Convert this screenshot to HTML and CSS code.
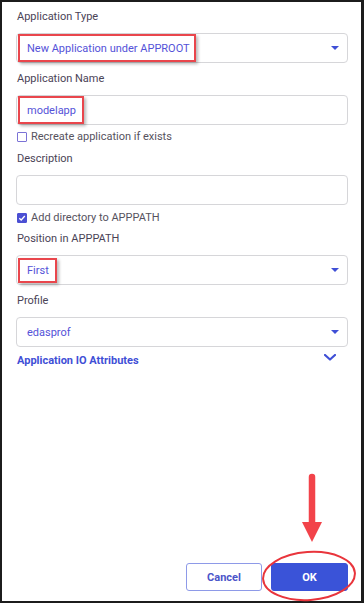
FILE: index.html
```html
<!DOCTYPE html>
<html>
<head>
<meta charset="utf-8">
<link rel="stylesheet" href="styles.css">
</head>
<body>
<div class="frame">
  <div class="form">
    <div class="label l1">Application Type</div>
    <div class="field select">
      <span class="hl hl-type">New Application under APPROOT</span>
      <svg class="caret" width="8" height="4" viewBox="0 0 8 4"><path d="M0 0H8L4 4Z" fill="#3f4fd6"/></svg>
    </div>
    <div class="label">Application Name</div>
    <div class="field">
      <span class="hl hl-name">modelapp</span>
    </div>
    <div class="check-row cr1">
      <span class="box"></span>
      <span class="check-text">Recreate application if exists</span>
    </div>
    <div class="label l3">Description</div>
    <div class="field"></div>
    <div class="check-row cr2">
      <span class="box checked"><svg width="8" height="8" viewBox="0 0 8 8"><path d="M1.3 4.2 L3.2 6 L6.8 2" fill="none" stroke="#fff" stroke-width="1.3"/></svg></span>
      <span class="check-text">Add directory to APPPATH</span>
    </div>
    <div class="label l4">Position in APPPATH</div>
    <div class="field select">
      <span class="hl hl-first">First</span>
      <svg class="caret" width="8" height="4" viewBox="0 0 8 4"><path d="M0 0H8L4 4Z" fill="#3f4fd6"/></svg>
    </div>
    <div class="label">Profile</div>
    <div class="field select">
      <span class="value">edasprof</span>
      <svg class="caret" width="8" height="4" viewBox="0 0 8 4"><path d="M0 0H8L4 4Z" fill="#3f4fd6"/></svg>
    </div>
    <div class="io-row">
      <span class="io-title">Application IO Attributes</span>
      <svg class="chev" width="12" height="7" viewBox="0 0 12 7"><path d="M1 1 L6 5.5 L11 1" fill="none" stroke="#3f4fd6" stroke-width="2.2" stroke-linecap="round" stroke-linejoin="round"/></svg>
    </div>
  </div>
  <div class="actions">
    <button class="btn cancel">Cancel</button>
    <button class="btn ok">OK</button>
  </div>
  <svg class="annot" width="110" height="130" viewBox="0 0 110 130">
    <path d="M52 5 L52 52" stroke="#f2434a" stroke-width="6.5" stroke-linecap="round"/>
    <path d="M42 50 L62 50 L52 70 Z" fill="#f2434a"/>
    <ellipse cx="49" cy="104" rx="46" ry="24" fill="none" stroke="#e9353c" stroke-width="2" transform="rotate(-4 49 104)"/>
  </svg>
</div>
</body>
</html>
```
FILE: styles.css
```css
* { box-sizing: border-box; }
html, body { margin: 0; padding: 0; background: #fff; }
body { font-family: Roboto, "Noto Sans", Arial, sans-serif; }

.frame {
  position: relative;
  width: 364px;
  height: 603px;
  border: 2px solid #1c1c1c;
  border-right-width: 3px;
  background: #fff;
  display: flex;
  flex-direction: column;
  padding: 0 13px 10px 14px;
}

.form { display: flex; flex-direction: column; }

.label {
  font-size: 11px;
  line-height: 16px;
  height: 16px;
  color: #4a4356;
  padding-left: 1px;
  margin-top: 8px;
  margin-bottom: 8px;
}
.l1 { margin-top: 7px; }
.l3 { margin-top: 6px; }
.l4 { margin-top: 5px; }

.field {
  height: 30px;
  border: 1px solid #d6d6d9;
  border-radius: 4px;
  display: flex;
  align-items: center;
  padding: 0 1px;
  position: relative;
}
.select .caret { margin-left: auto; margin-right: 7px; }

.hl {
  height: 28px;
  border: 2px solid #e9464c;
  box-shadow: 2px 2px 3px rgba(0,0,0,0.28);
  display: flex;
  align-items: center;
  padding-left: 7px;
  font-size: 11px;
  color: #5452d8;
  white-space: nowrap;
}
.hl-type { width: 178px; }
.hl-name { width: 66px; }
.hl-first { width: 39px; height: 25px; }

.value {
  font-size: 11px;
  color: #5452d8;
  padding-left: 9px;
}

.check-row {
  display: flex;
  align-items: center;
  height: 16px;
  font-size: 11px;
  color: #56525e;
}
.cr1 { margin-top: 4px; }
.cr2 { margin-top: 5px; }
.box {
  width: 10px;
  height: 10px;
  border: 1.5px solid #7b72d6;
  border-radius: 1px;
  margin-left: 1px;
  margin-right: 4px;
  display: flex;
  align-items: center;
  justify-content: center;
}
.box.checked { background: #4b4fd3; border-color: #4b4fd3; }
.check-text { line-height: 16px; }

.io-row {
  display: flex;
  align-items: center;
  height: 16px;
  margin-top: 5px;
  position: relative;
}
.io-title {
  font-size: 11px;
  font-weight: 700;
  color: #3f4fd6;
  padding-left: 1px;
}
.chev { margin-left: auto; margin-right: 12px; margin-top: -6px; }

.actions {
  margin-top: auto;
  display: flex;
  justify-content: flex-end;
  gap: 9px;
}
.btn {
  height: 28px;
  border-radius: 3px;
  font-family: Roboto, Arial, sans-serif;
  font-size: 11px;
  font-weight: 700;
  cursor: pointer;
}
.cancel { background: #fff; border: 1px solid #8e9ae8; color: #4b55c9; width: 76px; }
.ok { background: #3a53d8; border: 1px solid #3a53d8; color: #fff; width: 77px; }

.annot {
  position: absolute;
  left: 258px;
  top: 470px;
  pointer-events: none;
}
```
